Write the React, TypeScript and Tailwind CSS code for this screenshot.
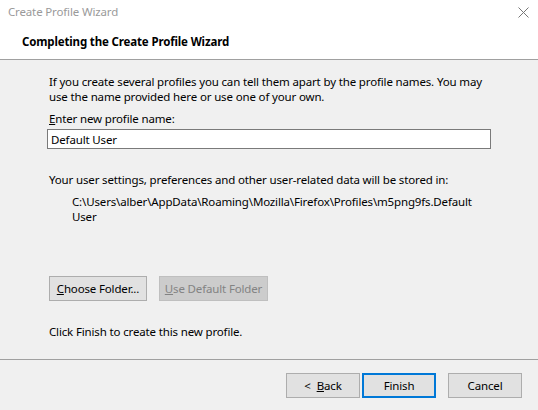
import React from 'react';

const font = { fontFamily: '"Noto Sans", "Segoe UI", sans-serif' };

type BtnProps = {
  children: React.ReactNode;
  width: string;
  disabled?: boolean;
  focused?: boolean;
};

function Btn({ children, width, disabled, focused }: BtnProps) {
  const look = disabled
    ? 'bg-[#cccccc] border border-[#bfbfbf] text-[#838383]'
    : focused
      ? 'bg-[#e1e1e1] border-2 border-[#0078d7] text-black'
      : 'bg-[#e1e1e1] border border-[#adadad] text-black';
  return (
    <button className={`h-[25px] flex items-center justify-center ${width} ${look}`}>
      {children}
    </button>
  );
}

export default function App() {
  return (
    <div
      className="w-[538px] h-[410px] bg-[#f0f0f0] flex flex-col text-[11.5px] tracking-[-0.15px] text-black"
      style={font}
    >
      {/* Title / header */}
      <header className="h-[60px] bg-white border-b border-[#a0a0a0] flex flex-col">
        <div className="h-[24px] flex items-center justify-between pl-[8px] pr-[9px]">
          <span className="text-[#9a9a9a] leading-none">Create Profile Wizard</span>
          <svg width="11" height="11" viewBox="0 0 11 11" className="text-[#777]">
            <path d="M0.5 0.5 L10.5 10.5 M10.5 0.5 L0.5 10.5" stroke="currentColor" strokeWidth="1" />
          </svg>
        </div>
        <div className="pl-[22px] mt-[10px] font-bold leading-[16px]">Completing the Create Profile Wizard</div>
      </header>

      {/* Body */}
      <main className="flex-1 flex flex-col pl-[49px] pr-[47px] pt-[14px] leading-[15px]">
        <p>
          If you create several profiles you can tell them apart by the profile names. You may use the name provided here or use one of your own.
        </p>
        <label className="mt-[7px]">
          <span className="underline">E</span>nter new profile name:
        </label>
        <div className="mt-[3px] ml-[-2px] h-[20px] bg-white border border-[#7a7a7a] flex items-center px-[3px]">
          Default User
        </div>
        <p className="mt-[23px]">Your user settings, preferences and other user-related data will be stored in:</p>
        <p className="mt-[7px] pl-[23px] pr-[4px] break-words">
          C:\Users\alber\AppData\Roaming\Mozilla\Firefox\Profiles\m5png9fs.Default User
        </p>
        <div className="mt-[52px] flex gap-[12px]">
          <Btn width="w-[98px]">
            <span>
              <span className="underline">C</span>hoose Folder...
            </span>
          </Btn>
          <Btn width="w-[109px]" disabled>
            <span>
              <span className="underline">U</span>se Default Folder
            </span>
          </Btn>
        </div>
        <p className="mt-[23px]">Click Finish to create this new profile.</p>
      </main>

      {/* Footer */}
      <footer className="h-[51px] border-t border-[#a0a0a0] flex items-start justify-end gap-[2px] pr-[16px] pt-[13px]">
        <Btn width="w-[74px]">
          <span>
            &lt; <span className="underline ml-[3px]">B</span>ack
          </span>
        </Btn>
        <Btn width="w-[74px]" focused>
          Finish
        </Btn>
        <span className="w-[8px]" />
        <Btn width="w-[74px]">Cancel</Btn>
      </footer>
    </div>
  );
}
